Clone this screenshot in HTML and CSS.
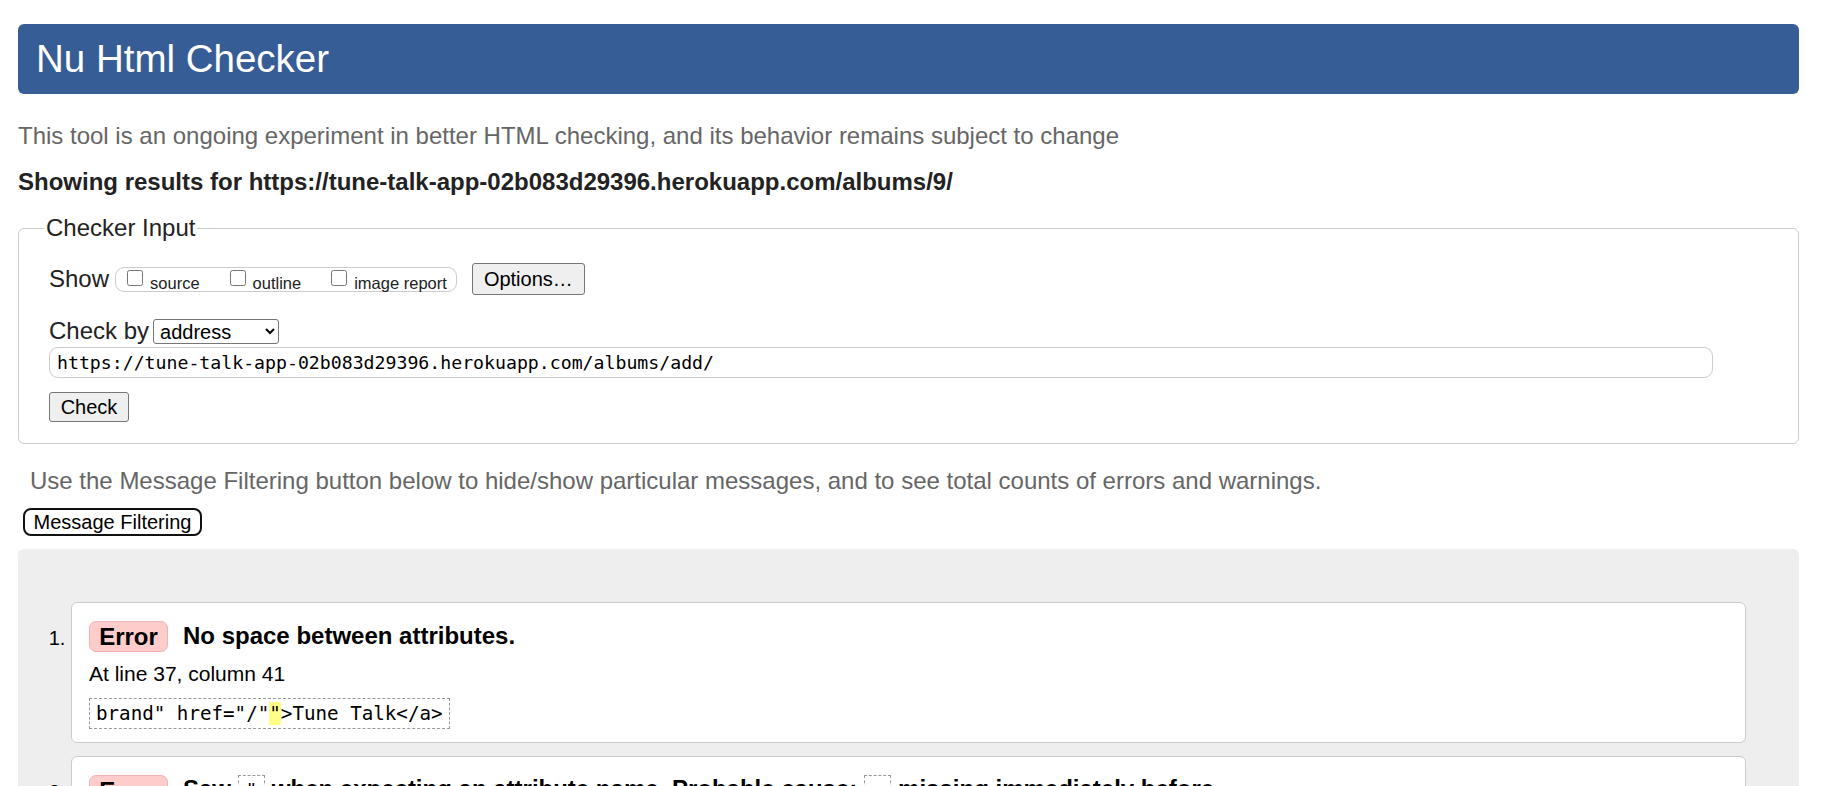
FILE: index.html
```html
<!DOCTYPE html>
<html lang="en">
<head>
<meta charset="utf-8">
<title>Nu Html Checker</title>
<link rel="stylesheet" href="styles.css">
</head>
<body>
<div class="page">
  <h1 class="title">Nu Html Checker</h1>
  <p class="intro">This tool is an ongoing experiment in better HTML checking, and its behavior remains subject to change</p>
  <p class="showing">Showing results for https://tune-talk-app-02b083d29396.herokuapp.com/albums/9/</p>

  <fieldset class="checker">
    <legend class="legend">Checker Input</legend>
    <div class="row show-row">
      <span class="lbl">Show</span>
      <span class="showgroup">
        <label class="opt"><input type="checkbox" class="cb"><span>source</span></label>
        <label class="opt"><input type="checkbox" class="cb"><span>outline</span></label>
        <label class="opt"><input type="checkbox" class="cb"><span>image report</span></label>
      </span>
      <button class="btn options">Options…</button>
    </div>
    <div class="row checkby-row">
      <span class="lbl">Check by</span>
      <select class="sel"><option>address</option></select>
    </div>
    <div class="url">https://tune-talk-app-02b083d29396.herokuapp.com/albums/add/</div>
    <div class="row"><button class="btn check">Check</button></div>
  </fieldset>

  <p class="filter-note">Use the Message Filtering button below to hide/show particular messages, and to see total counts of errors and warnings.</p>
  <button class="filter-btn">Message Filtering</button>

  <div class="results">
    <ol class="msgs">
      <li class="msg">
        <p class="msg-head"><span class="badge">Error</span><span class="msg-title">No space between attributes.</span></p>
        <p class="loc">At line 37, column 41</p>
        <p class="extract"><code class="code">brand" href="/"<mark class="hl">"</mark>&gt;Tune Talk&lt;/a&gt;</code></p>
      </li>
      <li class="msg">
        <p class="msg-head"><span class="badge">Error</span><span class="msg-title">Saw <code class="inline">"</code> when expecting an attribute name. Probable cause: <code class="inline">=</code> missing immediately before.</span></p>
        <p class="loc">At line 37, column 41</p>
        <p class="extract"><code class="code">brand" href="/"<mark class="hl">"</mark>&gt;Tune Talk&lt;/a&gt;</code></p>
      </li>
    </ol>
  </div>
</div>
</body>
</html>
```
FILE: styles.css
```css
html, body {
  margin: 0;
  padding: 0;
  background: #fff;
}
body {
  font-family: "Liberation Sans", Arial, sans-serif;
  font-size: 24px;
  color: #222;
}
.page {
  margin: 24px 35px 0 18px;
}
.title {
  margin: 0;
  height: 70px;
  line-height: 70px;
  padding: 0 18px;
  background: #365d95;
  color: #fff;
  font-size: 38.5px;
  font-weight: normal;
  border-radius: 6px;
}
.intro {
  margin: 28px 0 0 0;
  color: #666;
  line-height: 28px;
}
.showing {
  margin: 18px 0 0 0;
  font-weight: bold;
  line-height: 28px;
}
.checker {
  margin: 18px 0 0 0;
  padding: 21px 30px 21px 30px;
  border: 1px solid #ccc;
  border-radius: 6px;
}
.legend {
  padding: 0 2px;
  margin-left: -5px;
  color: #222;
  line-height: 28px;
}
.row {
  display: flex;
  align-items: center;
}
.lbl {
  line-height: 28px;
}
.show-row {
  height: 32px;
}
.showgroup {
  display: flex;
  align-items: center;
  margin-left: 6px;
  height: 23px;
  border: 1px solid #ccc;
  border-radius: 9px;
  padding: 0 9px 0 11px;
}
.opt {
  display: flex;
  align-items: flex-end;
  font-size: 16.5px;
  margin-right: 30px;
}
.opt:last-child {
  margin-right: 0;
}
.cb {
  width: 16px;
  height: 16px;
  margin: 0 7px 3px 0;
}
.opt span {
  line-height: 18px;
  position: relative;
  top: 3px;
}
.btn {
  font-family: "Liberation Sans", Arial, sans-serif;
  font-size: 20px;
  color: #000;
  background: #efefef;
  border: 1px solid #767676;
  border-radius: 3px;
  padding: 0;
}
.options {
  margin-left: 15px;
  height: 32px;
  width: 113px;
}
.checkby-row {
  margin-top: 22px;
  height: 28px;
}
.sel {
  margin-left: 4px;
  width: 126px;
  height: 25px;
  font-family: "Liberation Sans", Arial, sans-serif;
  font-size: 20px;
  color: #000;
  border: 1px solid #767676;
  border-radius: 3px;
  background: #fff;
  padding: 0 2px;
}
.url {
  margin-top: 2px;
  width: 1664px;
  height: 31px;
  box-sizing: border-box;
  border: 1px solid #ccc;
  border-radius: 9px;
  padding: 0 7px;
  font-family: "DejaVu Sans Mono", "Liberation Mono", monospace;
  font-size: 18.2px;
  line-height: 29px;
  color: #000;
  white-space: nowrap;
}
.check {
  margin-top: 14px;
  height: 30px;
  width: 80px;
}
.filter-note {
  margin: 23px 0 0 12px;
  color: #666;
  line-height: 28px;
}
.filter-btn {
  display: block;
  margin: 13px 0 0 5px;
  height: 28px;
  width: 179px;
  padding: 0;
  background: #fff;
  border: 2px solid #111;
  border-radius: 8px;
  font-family: "Liberation Sans", Arial, sans-serif;
  font-size: 20px;
  color: #000;
}
.results {
  margin-top: 13px;
  background: #eee;
  border-radius: 6px 6px 0 0;
  padding: 53px 53px 40px 0;
  height: 300px;
}
.msgs {
  margin: 0;
  padding: 0 0 0 53px;
  font-size: 20px;
}
.msg {
  background: #fff;
  border: 1px solid #ccc;
  border-radius: 6px;
  padding: 17px 18px 13px 17px;
  margin-bottom: 13px;
  height: 109px;
  color: #000;
}
.msg::marker {
  font-size: 20px;
}
.msg-head {
  margin: 0;
  display: flex;
  align-items: center;
  height: 32px;
  font-weight: bold;
  font-size: 24px;
}
.badge {
  display: inline-block;
  background: #fcc;
  border: 1px solid #f0b4b4;
  border-radius: 7px;
  width: 79px;
  height: 31px;
  box-sizing: border-box;
  text-align: center;
  line-height: 29px;
  margin-right: 15px;
}
.msg-title {
  line-height: 28px;
  white-space: nowrap;
}
.inline {
  display: inline-block;
  font-family: "DejaVu Sans Mono", "Liberation Mono", monospace;
  font-weight: normal;
  font-size: 19px;
  line-height: 28px;
  border: 1px dashed #999;
  padding: 0 7px;
  vertical-align: top;
}
.loc {
  margin: 10px 0 0 0;
  font-size: 21px;
  line-height: 24px;
}
.extract {
  margin: 12px 0 0 0;
}
.code {
  display: inline-block;
  border: 1px dashed #999;
  font-family: "DejaVu Sans Mono", "Liberation Mono", monospace;
  font-size: 19.2px;
  line-height: 29px;
  padding: 0 6px;
  color: #000;
}
.hl {
  background: #ff8;
  color: #000;
}
```
